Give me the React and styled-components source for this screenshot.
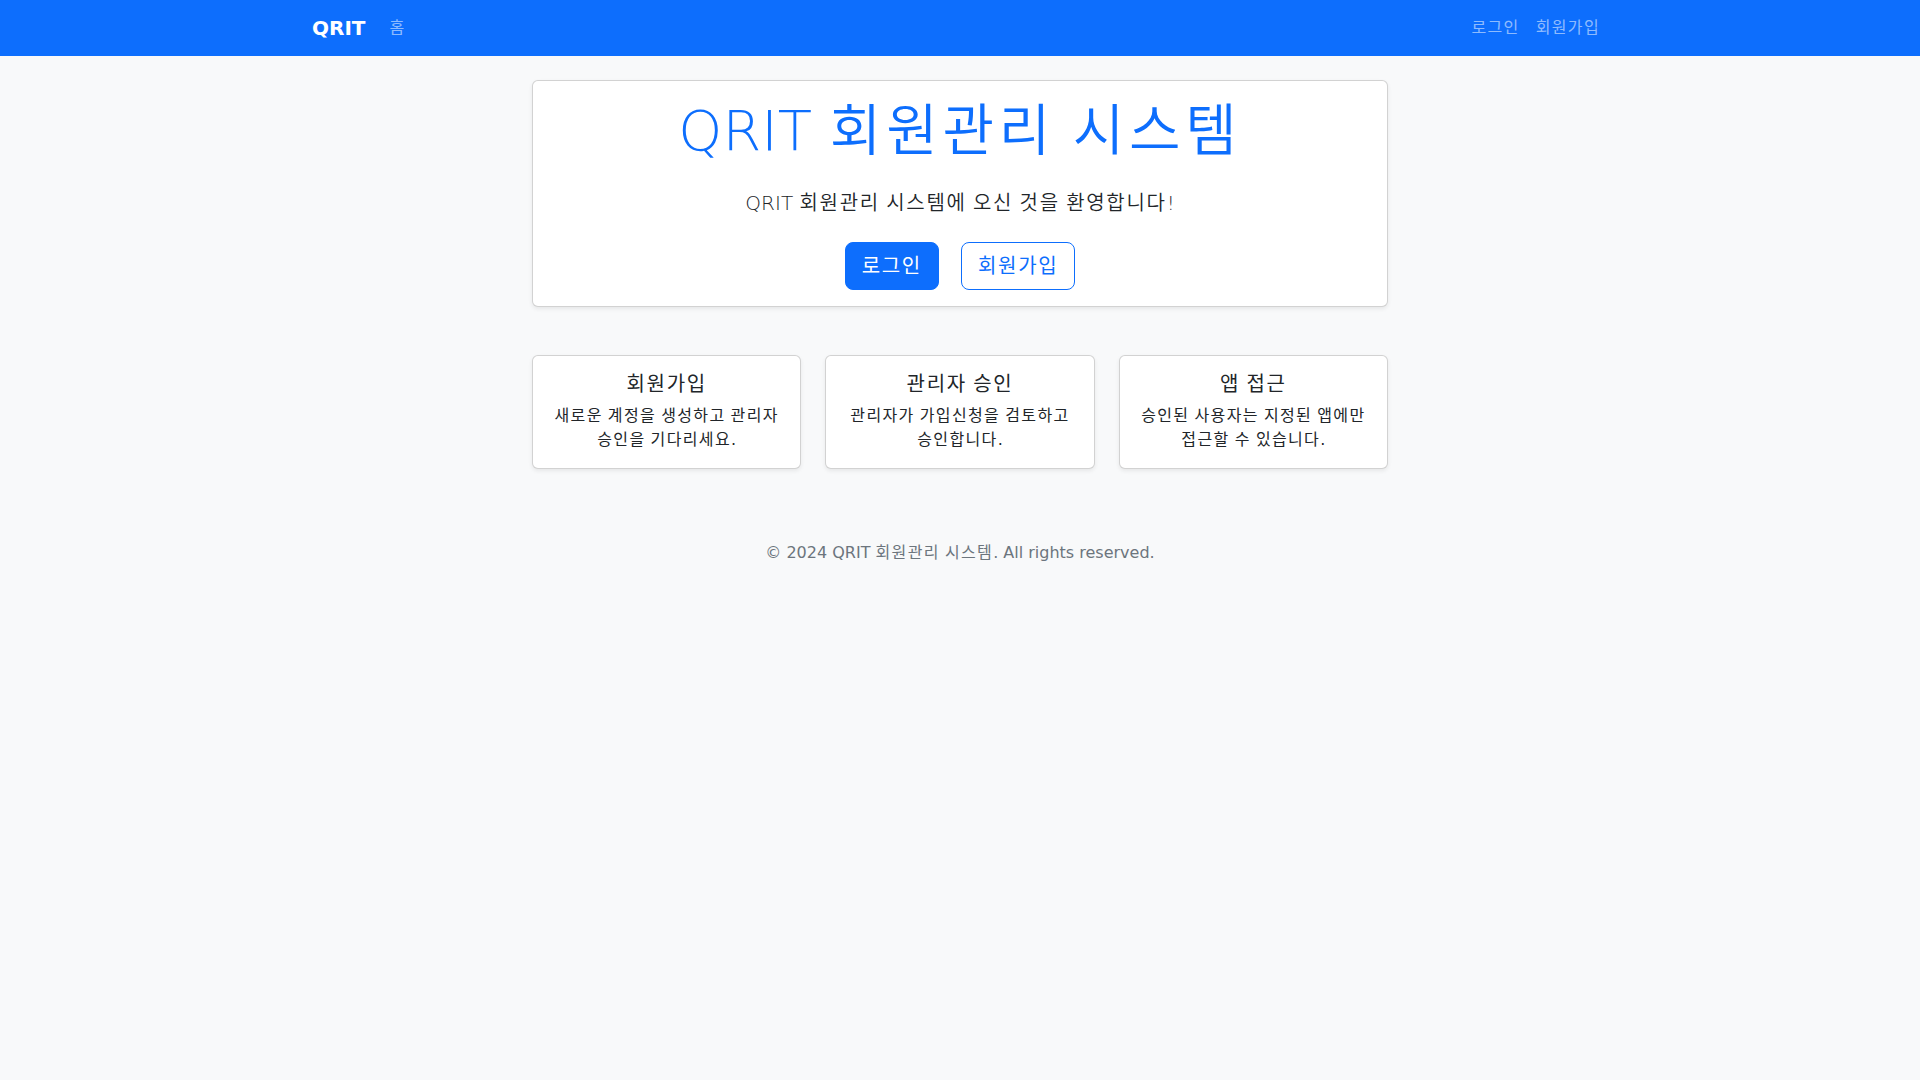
import React from "react";
import styled, { createGlobalStyle } from "styled-components";

const GlobalStyle = createGlobalStyle`
  *, *::before, *::after { box-sizing: border-box; }
  body {
    margin: 0;
    background: #f8f9fa;
    color: #212529;
    font-family: "DejaVu Sans", "Noto Sans CJK KR", sans-serif;
    font-size: 16px;
    line-height: 1.5;
    word-break: keep-all;
  }
`;

const Ko = styled.span`
  font-weight: ${(p) => (p.$light ? 350 : 400)};
  letter-spacing: 0.085em;
`;

function ko(text, light) {
  return text.split(/([\uAC00-\uD7A3]+)/).map((part, i) =>
    i % 2 ? (
      <Ko key={i} $light={light}>
        {part}
      </Ko>
    ) : (
      part
    )
  );
}

const features = [
  { title: "회원가입", text: "새로운 계정을 생성하고 관리자 승인을 기다리세요." },
  { title: "관리자 승인", text: "관리자가 가입신청을 검토하고 승인합니다." },
  { title: "앱 접근", text: "승인된 사용자는 지정된 앱에만 접근할 수 있습니다." },
];

export default function App() {
  return (
    <>
      <GlobalStyle />
      <Navbar>
        <NavContainer>
          <Brand href="#">QRIT</Brand>
          <NavList>
            <NavLink href="#">{ko("홈")}</NavLink>
          </NavList>
          <NavList $end>
            <NavLink href="#">{ko("로그인")}</NavLink>
            <NavLink href="#">{ko("회원가입")}</NavLink>
          </NavList>
        </NavContainer>
      </Navbar>

      <Main>
        <Hero>
          <HeroTitle>{ko("QRIT 회원관리 시스템", true)}</HeroTitle>
          <Lead>{ko("QRIT 회원관리 시스템에 오신 것을 환영합니다!", true)}</Lead>
          <Actions>
            <Button $primary>{ko("로그인")}</Button>
            <Button>{ko("회원가입")}</Button>
          </Actions>
        </Hero>

        <FeatureRow>
          {features.map((f) => (
            <FeatureCard key={f.title}>
              <FeatureTitle>{ko(f.title)}</FeatureTitle>
              <FeatureText>{ko(f.text)}</FeatureText>
            </FeatureCard>
          ))}
        </FeatureRow>
      </Main>

      <Footer>{ko("© 2024 QRIT 회원관리 시스템. All rights reserved.")}</Footer>
    </>
  );
}

const Navbar = styled.nav`
  background: #0d6efd;
  padding: 8px 0;
`;

const NavContainer = styled.div`
  width: 1320px;
  margin: 0 auto;
  padding: 0 12px;
  display: flex;
  align-items: center;
`;

const Brand = styled.a`
  color: #fff;
  font-weight: 700;
  font-size: 20px;
  line-height: 30px;
  padding: 5px 0;
  margin-right: 16px;
  text-decoration: none;
`;

const NavList = styled.div`
  display: flex;
  margin-left: ${(p) => (p.$end ? "auto" : "0")};
`;

const NavLink = styled.a`
  color: rgba(255, 255, 255, 0.55);
  text-decoration: none;
  padding: 8px;
  font-size: 16px;
  line-height: 24px;
`;

const Main = styled.main`
  width: 880px;
  margin: 24px auto 0;
  padding: 0 12px;
`;

const Card = styled.div`
  background: #fff;
  border: 1px solid rgba(0, 0, 0, 0.175);
  border-radius: 6px;
  box-shadow: 0 2px 4px rgba(0, 0, 0, 0.075);
  padding: 16px;
  text-align: center;
`;

const Hero = styled(Card)``;

const HeroTitle = styled.h1`
  margin: 0 0 24px;
  font-size: 56px;
  font-weight: 300;
  line-height: 1.2;
  color: #0d6efd;
`;

const Lead = styled.p`
  margin: 0 0 24px;
  font-size: 20px;
  font-weight: 300;
  line-height: 30px;
`;

const Actions = styled.div`
  display: flex;
  justify-content: center;
  gap: 22px;
`;

const Button = styled.button`
  font-family: inherit;
  font-size: 20px;
  line-height: 30px;
  padding: 8px 16px;
  border-radius: 8px;
  border: 1px solid #0d6efd;
  background: ${(p) => (p.$primary ? "#0d6efd" : "transparent")};
  color: ${(p) => (p.$primary ? "#fff" : "#0d6efd")};
  cursor: pointer;
`;

const FeatureRow = styled.div`
  display: grid;
  grid-template-columns: repeat(3, 1fr);
  gap: 24px;
  margin-top: 48px;
`;

const FeatureCard = styled(Card)``;

const FeatureTitle = styled.h5`
  margin: 0 0 8px;
  font-size: 20px;
  font-weight: 400;
  line-height: 24px;
`;

const FeatureText = styled.p`
  margin: 0;
  font-size: 16px;
  line-height: 24px;
`;

const Footer = styled.footer`
  margin-top: 48px;
  padding: 24px 0;
  text-align: center;
  color: #6c757d;
`;
